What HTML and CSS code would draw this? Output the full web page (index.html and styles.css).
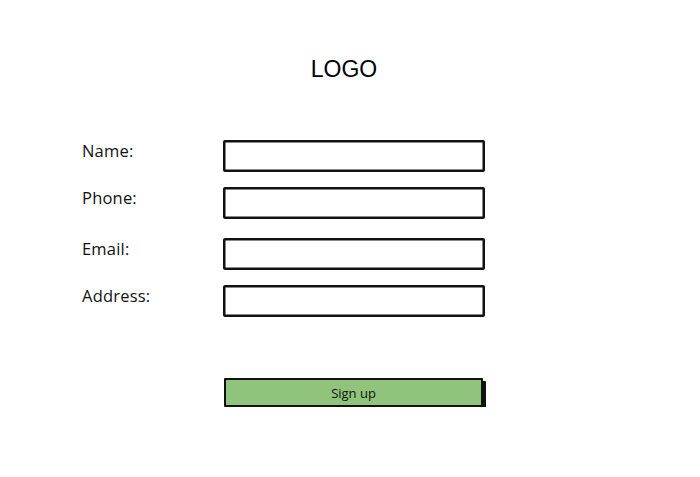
FILE: index.html
```html
<!DOCTYPE html>
<html lang="en">
<head>
    <meta charset="UTF-8">
    <meta name="viewport" content="width=device-width, initial-scale=1.0">
    <title>Sign up</title>
    <link rel="stylesheet" href="styles.css">
</head>
<body>
    <div class="page">
        <div class="logo">LOGO</div>
        <form class="signup-form">
            <div class="form-row">
                <label for="name">Name:</label>
                <input type="text" id="name">
            </div>
            <div class="form-row">
                <label for="phone">Phone:</label>
                <input type="text" id="phone">
            </div>
            <div class="form-row row-wide">
                <label for="email">Email:</label>
                <input type="text" id="email">
            </div>
            <div class="form-row">
                <label for="address">Address:</label>
                <input type="text" id="address">
            </div>
            <div class="form-row actions">
                <span></span>
                <button type="button" class="signup-button">Sign up</button>
            </div>
        </form>
    </div>
</body>
</html>
```

FILE: styles.css
```css
body {
    margin: 0;
    padding: 0;
    background: #fff;
    font-family: 'Open Sans', sans-serif;
    color: #111;
}
.page {
    width: 700px;
    padding-top: 55px;
}
.logo {
    width: 688px;
    text-align: center;
    font-family: 'Liberation Sans', Arial, sans-serif;
    font-size: 23px;
    line-height: 28px;
    color: #000;
}
.signup-form {
    margin-top: 57px;
    padding-left: 82px;
    display: flex;
    flex-direction: column;
    gap: 15px;
}
.form-row {
    display: grid;
    grid-template-columns: 141px 262px;
    align-items: start;
}
.form-row.row-wide {
    margin-top: 4px;
}
.form-row label {
    font-size: 16.5px;
    font-weight: 500;
    line-height: 22px;
    letter-spacing: 0.2px;
}
.form-row input {
    box-sizing: border-box;
    height: 32px;
    width: 262px;
    border: 2px solid #111;
    border-radius: 2px;
    background: #fff;
    outline: none;
    box-shadow: inset 0 0 0 0.5px #111;
}
.actions {
    margin-top: 46px;
}
.signup-button {
    box-sizing: border-box;
    width: 259px;
    height: 29px;
    margin-left: 1px;
    background: #90c47c;
    border: 2px solid #111;
    border-radius: 1px;
    box-shadow: 3px 3px 0 #111;
    font-family: 'Open Sans', sans-serif;
    font-size: 13px;
    color: #111;
    padding: 0;
    cursor: pointer;
}
```
